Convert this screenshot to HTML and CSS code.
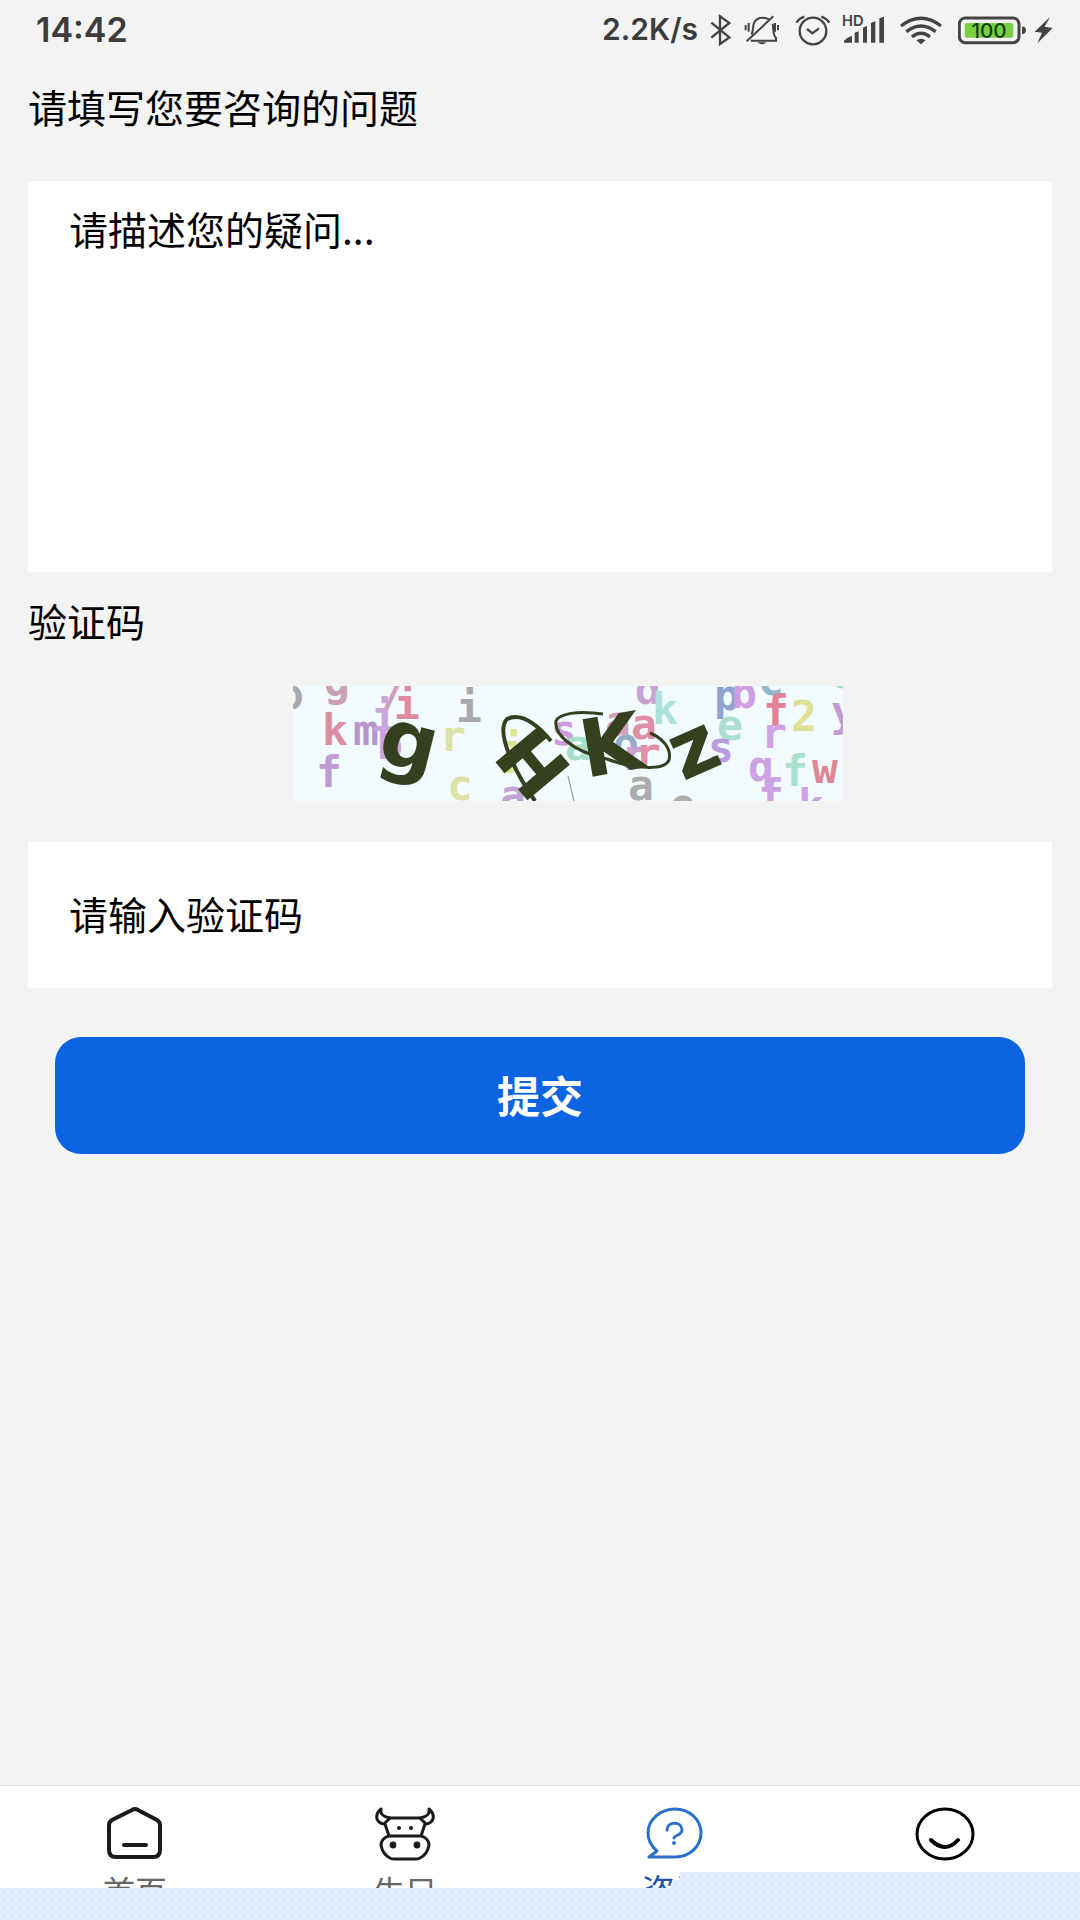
FILE: index.html
```html
<!DOCTYPE html>
<html lang="zh-CN">
<head>
  <meta charset="UTF-8">
  <meta name="viewport" content="width=device-width, initial-scale=1.0">
  <title>咨询</title>
  <link rel="stylesheet" href="styles.css">
</head>
<body>
  <div id="app">
    <header class="status-bar">
      <span class="time">14:42</span>
      <div class="status-right">
        <span class="speed">2.2K/s</span>
        <!-- Bluetooth -->
        <svg width="22" height="33" viewBox="384 36 66 99" fill="none" stroke="#444" stroke-width="7">
          <path d="M388 65l54 44-28 20V46l28 20-54 44"/>
        </svg>
        <!-- Muted bell -->
        <svg width="38" height="33" viewBox="492 36 114 99" fill="none" stroke="#444" stroke-width="6">
          <path d="M514 100c7-9 4-25 8-34 6-14 28-22 46-10M578 68c3 12-1 32 10 43v8h-76M500 121l80-75M497 72v16M506 66v26M585 66v26M594 72v16"/>
          <path d="M532 124h28q-14 12-28 0z" fill="#444" stroke="none"/>
        </svg>
        <!-- Alarm clock -->
        <svg width="36" height="33" viewBox="642 36 108 99" fill="none" stroke="#444" stroke-width="7">
          <circle cx="699" cy="90" r="40"/>
          <path d="M681 84l16 13 20-15M649 65q10-14 24-18M724 47q14 4 24 18"/>
        </svg>
        <!-- Signal -->
        <svg width="46" height="33" viewBox="786 36 138 99" fill="#444">
          <text class="hd-text" x="786" y="75">HD</text>
          <path d="M792 125v-6q10-10 24-15v21zM824 95l12-4v34h-12zM849 80l12-6v51h-12zM873 66l13-6v65h-13zM898 52l14-5v78h-14z"/>
        </svg>
        <!-- Wifi -->
        <svg width="46" height="33" viewBox="960 36 138 99" fill="none" stroke="#444" stroke-width="10">
          <path d="M963 75q60-46 120 0M979 92q44-34 88 0M996 108q27-22 54 0"/>
          <path d="M1009 118q14-10 28 0l-14 12z" fill="#444" stroke="none"/>
        </svg>
        <!-- Battery, charging -->
        <svg width="96" height="33" viewBox="1134 36 288 99">
          <rect x="1138" y="51" width="179" height="74" rx="18" fill="none" stroke="#444" stroke-width="9"/>
          <rect x="1154" y="66" width="146" height="44" rx="7" fill="#78cf42"/>
          <path d="M1326 76q12 2 12 12t-12 12z" fill="#444"/>
          <path d="M1410 48l-46 44 22 3-14 32 46-46-24-4z" fill="#444"/>
          <text class="battery-text" x="1227" y="110">100</text>
        </svg>
      </div>
    </header>

    <form class="question-form">
      <label class="field-label" for="question">请填写您要咨询的问题</label>
      <textarea id="question" class="field question" placeholder="请描述您的疑问..."></textarea>

      <label class="field-label" for="code">验证码</label>
      <div class="captcha-row">
        <svg class="captcha" viewBox="0 0 550 115" role="img" aria-label="验证码图片">
          <rect width="550" height="115" fill="#f2fbff"/>
          <!-- Background noise letters -->
          <g class="noise">
            <text x="-15" y="23" fill="#aaa">o</text>
            <text x="31" y="10" fill="#cb9fb4">g</text>
            <text x="88" y="20" fill="#cf9dba">/</text>
            <text x="101" y="33" fill="#df8a9e">i</text>
            <text x="29" y="59" fill="#dc8c9f">k</text>
            <text x="60" y="59" fill="#b894cb">m</text>
            <text x="78" y="45" fill="#c8a5d8">i</text>
            <text x="84" y="73" fill="#cba3e0">b</text>
            <text x="23" y="101" fill="#c09bd3">f</text>
            <text x="163" y="36" fill="#a9a9ad">i</text>
            <text x="147" y="65" fill="#dbe2a2">r</text>
            <text x="154" y="114" fill="#dce2a1">c</text>
            <text x="206" y="78" fill="#dce48f">j</text>
            <text x="207" y="124" fill="#c0a4d4">a</text>
            <text x="258" y="59" fill="#cf99dd">s</text>
            <text x="272" y="74" fill="#a9dfc9">a</text>
            <text x="342" y="18" fill="#c6a1d2">d</text>
            <text x="359" y="38" fill="#abe1d8">k</text>
            <text x="312" y="50" fill="#d6a0bf">a</text>
            <text x="338" y="53" fill="#df8fa5">a</text>
            <text x="320" y="72" fill="#93abc9">o</text>
            <text x="328" y="84" fill="#caa1cf">r</text>
            <text x="342" y="82" fill="#df91a6">r</text>
            <text x="335" y="114" fill="#acacac">a</text>
            <text x="377" y="133" fill="#acacac">o</text>
            <text x="421" y="24" fill="#8fa3cf">p</text>
            <text x="438" y="22" fill="#cf9ee2">b</text>
            <text x="465" y="9" fill="#91b7ca">c</text>
            <text x="424" y="54" fill="#a9ddce">e</text>
            <text x="415" y="76" fill="#b89be0">s</text>
            <text x="470" y="40" fill="#e28294">f</text>
            <text x="498" y="45" fill="#dce093">2</text>
            <text x="468" y="62" fill="#d3a2e5">r</text>
            <text x="538" y="40" fill="#c39dd1">y</text>
            <text x="537" y="2" fill="#a9ddce">o</text>
            <text x="455" y="95" fill="#cda2e4">q</text>
            <text x="489" y="100" fill="#abe0cc">f</text>
            <text x="519" y="97" fill="#df8593">w</text>
            <text x="465" y="124" fill="#cda2e4">f</text>
            <text x="505" y="134" fill="#cda2e4">k</text>
          </g>
          <!-- Strokes through the code -->
          <path d="M242 115C222 86 202 46 214 33c16-8 34 10 44 22" fill="none" stroke="#35401f" stroke-width="4"/>
          <path d="M310 28c-26-4-44 0-47 7-2 12 14 30 51 38 26 10 58 12 62 1 3-12-7-22-19-27" fill="none" stroke="#35401f" stroke-width="3"/>
          <path d="M275 90l6 25" stroke="#8a9080" stroke-width="1"/>
          <g class="code">
            <text font-size="80" transform="translate(110 82) rotate(14)">g</text>
            <text font-size="76" transform="translate(239 78) rotate(50)" y="27">H</text>
            <text font-size="80" transform="translate(318 58) rotate(-10)" y="29">K</text>
            <text font-size="80" transform="translate(402 66) rotate(-24)" y="22">z</text>
          </g>
        </svg>
      </div>
      <input id="code" class="field code-input" type="text" placeholder="请输入验证码" autocomplete="off">

      <button class="submit" type="submit">提交</button>
    </form>

    <nav class="tab-bar">
      <a class="tab" href="#home">
        <svg width="60" height="60" viewBox="0 0 60 60" fill="none" stroke="#1a1a1a" stroke-width="4" stroke-linecap="round">
          <path d="M27 7q3-2 6 0l19 10q3 2 3 5v25q0 7-7 7H11q-7 0-7-7V22q0-3 3-5zM19 42h22"/>
        </svg>
        <span>首页</span>
      </a>
      <a class="tab" href="#cattle">
        <svg width="60" height="60" viewBox="0 0 60 60" fill="none" stroke="#1a1a1a" stroke-width="3" stroke-linejoin="round">
          <path d="M6 6C-1 12 1 20 9 21l6-6C9 14 5 12 6 6zM54 6c7 6 5 14-3 15l-6-6c6-1 10-3 9-9z"/>
          <path d="M15 15h30M10 21l4 12M50 21l-4 12M14 33h32c5 1 8 5 8 9-1 6-5 11-9 13-1 1-3 1-4 1H19c-1 0-3 0-4-1-4-2-8-7-9-13 0-4 3-8 8-9z"/>
          <g fill="#1a1a1a" stroke="none">
            <circle cx="24" cy="25" r="2"/>
            <circle cx="36" cy="25" r="2"/>
            <circle cx="18" cy="42" r="3.4"/>
            <circle cx="42" cy="42" r="3.4"/>
          </g>
        </svg>
        <span>牛只</span>
      </a>
      <a class="tab active" href="#consult">
        <svg width="60" height="60" viewBox="0 0 60 60" fill="none" stroke="#2b70cb" stroke-width="3" stroke-linecap="round" stroke-linejoin="round">
          <path d="M30 54H4l8-6C6 43 3 37 3 30 3 17 15 6 30 6s26 11 26 24-11 24-26 24z"/>
          <path d="M22 27c0-9 15-9 15 0 0 5-7 5-8 8"/>
          <circle cx="29" cy="40" r="1" fill="#2b70cb" stroke-width="2"/>
        </svg>
        <span>咨询</span>
      </a>
      <a class="tab" href="#mine" aria-label="我的">
        <svg width="60" height="60" viewBox="0 0 60 60" fill="none" stroke="#000" stroke-width="3" stroke-linecap="round">
          <ellipse cx="30" cy="31" rx="28" ry="25"/>
          <path d="M16 37q14 14 27 0" stroke-width="4"/>
        </svg>
      </a>
    </nav>
    <div class="bottom-strip"></div>
  </div>
</body>
</html>
```

FILE: styles.css
```css
* {
  box-sizing: border-box;
}
body {
  margin: 0;
  font-family: "Noto Sans CJK SC", sans-serif;
  background-color: #f3f3f3;
  color: #000;
}
#app {
  position: relative;
  display: flex;
  flex-direction: column;
  min-height: 100vh;
}

/* Status bar */
.status-bar {
  display: flex;
  justify-content: space-between;
  align-items: center;
  height: 58px;
  padding: 0 26px 0 36px;
  font-family: Inter, sans-serif;
  font-weight: 600;
  color: #3c3c3c;
}
.time {
  font-size: 34px;
}
.status-right {
  display: flex;
  align-items: center;
  gap: 12px;
}
.speed {
  font-size: 30px;
}
.hd-text {
  font-size: 44px;
  font-weight: 600;
}
.battery-text {
  font-size: 62px;
  font-weight: 500;
  text-anchor: middle;
  fill: #17400f;
}

/* Form */
.question-form {
  flex: 1;
  display: flex;
  flex-direction: column;
  padding: 18px 28px 0;
}
.field-label {
  font-size: 39px;
  line-height: 60px;
}
.field {
  width: 100%;
  border: none;
  border-radius: 2px;
  outline: none;
  background-color: #fff;
  color: #000;
  font-family: inherit;
  font-size: 39px;
  line-height: 60px;
}
.field::placeholder {
  color: #000;
  opacity: 1;
}
.question {
  height: 391px;
  margin: 45px 0 18px;
  padding: 17px 41px;
  resize: none;
}
.captcha-row {
  display: flex;
  justify-content: center;
  margin: 36px 0 41px;
  padding-left: 56px;
}
.captcha {
  width: 550px;
  overflow: hidden;
}
.noise {
  font-family: "DejaVu Sans Mono", monospace;
  font-size: 43px;
  font-weight: bold;
}
.code {
  font-family: "DejaVu Sans", sans-serif;
  font-weight: bold;
  text-anchor: middle;
  fill: #35401f;
}
.code-input {
  height: 146px;
  padding: 0 41px 4px;
}
.submit {
  height: 117px;
  margin: 49px 27px 0;
  padding: 0 0 4px;
  border: none;
  border-radius: 26px;
  background-color: #0c64e1;
  color: #fff;
  font-family: inherit;
  font-size: 43px;
  font-weight: bold;
  cursor: pointer;
}

/* Bottom tabs */
.tab-bar {
  display: flex;
  height: 135px;
  border-top: 1px solid #e4e4e4;
  background-color: #fff;
}
.tab {
  flex: 1;
  display: flex;
  flex-direction: column;
  align-items: center;
  gap: 5px;
  padding-top: 17px;
  color: #666;
  font-size: 32px;
  line-height: 44px;
  text-decoration: none;
}
.tab.active {
  color: #1c57a8;
  font-size: 34px;
}

/* Dotted strip lying over the tab labels */
.bottom-strip {
  position: absolute;
  left: 0;
  right: 0;
  bottom: 0;
  height: 48px;
  background-color: #e0edff;
  background-image: radial-gradient(circle, #cfe2f7 1px, transparent 1px);
  background-size: 8px 8px;
  clip-path: polygon(0 16px, 672px 16px, 672px 8px, 680px 8px, 680px 0, 100% 0, 100% 100%, 0 100%);
}
```
